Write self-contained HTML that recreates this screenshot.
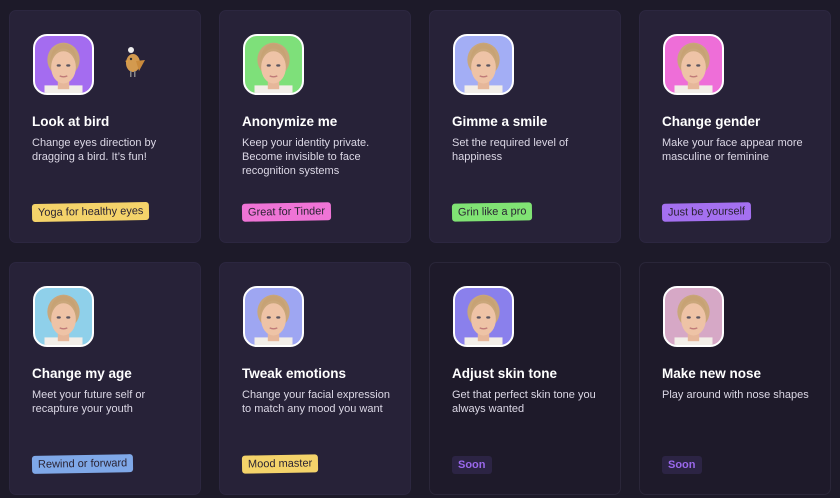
<!DOCTYPE html><html><head><meta charset="utf-8"><style>
*{margin:0;padding:0;box-sizing:border-box}
body{width:840px;height:498px;background:#1d1a29;font-family:"Liberation Sans",sans-serif;position:relative;overflow:hidden}
.c{position:absolute;width:192px;height:233px;border-radius:7px;background:#272238;border:1px solid #2c2740}
.c.s{background:#1e1a2a;border:1px solid #2a2639}
.av{position:absolute;left:23px;top:23px;width:61px;height:61px;border:2px solid #fff;border-radius:14px;overflow:hidden}
.av svg{display:block}
h3{position:absolute;left:22px;top:103px;font-size:13.5px;font-weight:bold;color:#fff}
p{position:absolute;left:22px;top:125px;font-size:11px;line-height:14px;color:#dcd8e6;width:152px}
.t{position:absolute;left:22px;top:192px;font-size:11px;color:#2a2333;padding:3px 6px;border-radius:3px;transform:rotate(-1deg)}
.so{position:absolute;left:22px;top:193px;font-size:11px;color:#9a68ec;background:#2c2444;padding:3px 6px;border-radius:3px;font-weight:bold}
</style></head><body>
<svg width="0" height="0" style="position:absolute"><defs><g id="f">
<ellipse cx="30" cy="25" rx="17" ry="18" fill="#c9a67a"/>
<rect x="10" y="52" width="40" height="12" fill="#f2eee8"/>
<rect x="24" y="42" width="12" height="14" fill="#e6b79a"/>
<ellipse cx="30" cy="33" rx="13" ry="17" fill="#eec3a6"/>
<path d="M16 28 Q17 9 30 8 Q43 9 44 28 Q40 14 30 13 Q20 14 16 28Z" fill="#c7a274"/>
<ellipse cx="25" cy="31" rx="2.2" ry="1.2" fill="#5b5560"/><ellipse cx="35" cy="31" rx="2.2" ry="1.2" fill="#5b5560"/>
<path d="M26 42 Q30 44 34 42" stroke="#c07a78" stroke-width="1.4" fill="none"/>
</g></defs></svg>

<div class="c" style="left:9px;top:10px"><div class="av" style="background:#a46cf0"><svg width="57" height="57" viewBox="0 0 60 60"><use href="#f"/></svg></div>
<svg style="position:absolute;left:112px;top:34px" width="24" height="34" viewBox="0 0 24 34"><circle cx="9" cy="5" r="3" fill="#eee"/><ellipse cx="11" cy="18" rx="7" ry="9" fill="#d39a4f"/><path d="M14 16 L23 15 L17 26Z" fill="#c98a3c"/><circle cx="9" cy="14" r="1.2" fill="#333"/><path d="M3 16 L6 15 L6 18Z" fill="#e0a040"/><rect x="8" y="26" width="1.5" height="6" fill="#888"/><rect x="12" y="26" width="1.5" height="6" fill="#888"/></svg>
<h3>Look at bird</h3><p>Change eyes direction by dragging a bird. It’s fun!</p><span class="t" style="background:#f4d36a">Yoga for healthy eyes</span></div>

<div class="c" style="left:219px;top:10px"><div class="av" style="background:#7ee07a"><svg width="57" height="57" viewBox="0 0 60 60"><use href="#f"/></svg></div>
<h3>Anonymize me</h3><p>Keep your identity private. Become invisible to face recognition systems</p><span class="t" style="background:#ef74d6">Great for Tinder</span></div>

<div class="c" style="left:429px;top:10px"><div class="av" style="background:#a3aef5"><svg width="57" height="57" viewBox="0 0 60 60"><use href="#f"/></svg></div>
<h3>Gimme a smile</h3><p>Set the required level of happiness</p><span class="t" style="background:#80e374">Grin like a pro</span></div>

<div class="c" style="left:639px;top:10px"><div class="av" style="background:#ee6ed8"><svg width="57" height="57" viewBox="0 0 60 60"><use href="#f"/></svg></div>
<h3>Change gender</h3><p>Make your face appear more masculine or feminine</p><span class="t" style="background:#a470f0">Just be yourself</span></div>

<div class="c" style="left:9px;top:262px"><div class="av" style="background:#8fd0ea"><svg width="57" height="57" viewBox="0 0 60 60"><use href="#f"/></svg></div>
<h3>Change my age</h3><p>Meet your future self or recapture your youth</p><span class="t" style="background:#7fa8e8">Rewind or forward</span></div>

<div class="c" style="left:219px;top:262px"><div class="av" style="background:#9ea6f2"><svg width="57" height="57" viewBox="0 0 60 60"><use href="#f"/></svg></div>
<h3>Tweak emotions</h3><p>Change your facial expression to match any mood you want</p><span class="t" style="background:#f4d36a">Mood master</span></div>

<div class="c s" style="left:429px;top:262px"><div class="av" style="background:#8a80ec"><svg width="57" height="57" viewBox="0 0 60 60"><use href="#f"/></svg></div>
<h3>Adjust skin tone</h3><p>Get that perfect skin tone you always wanted</p><span class="so">Soon</span></div>

<div class="c s" style="left:639px;top:262px"><div class="av" style="background:#d6a8c6"><svg width="57" height="57" viewBox="0 0 60 60"><use href="#f"/></svg></div>
<h3>Make new nose</h3><p>Play around with nose shapes</p><span class="so">Soon</span></div>
</body></html>
